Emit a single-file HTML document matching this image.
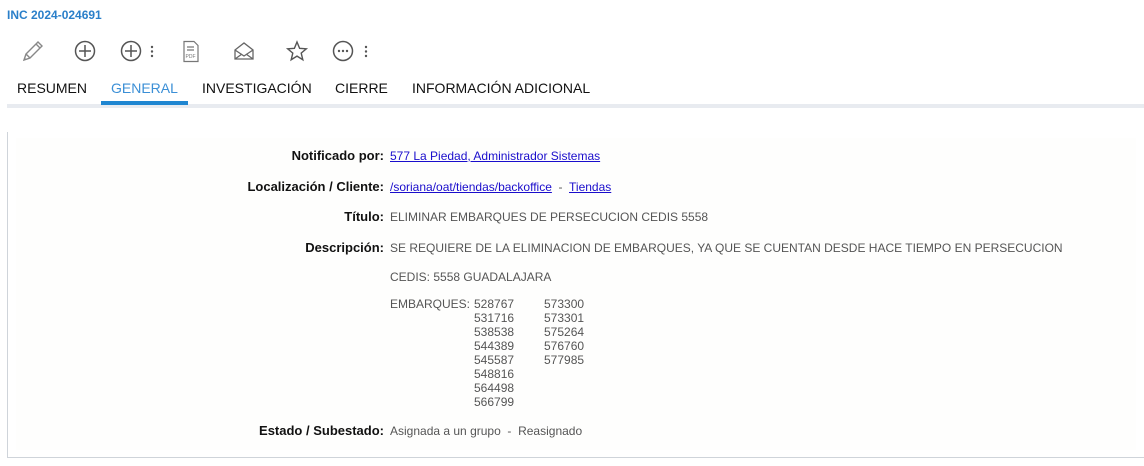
<!DOCTYPE html>
<html><head><meta charset="utf-8"><style>
*{margin:0;padding:0;box-sizing:border-box}
body{width:1144px;height:466px;background:#fff;font-family:"Liberation Sans",Arial,sans-serif;position:relative;overflow:hidden}
.title{position:absolute;left:7px;top:8px;font-size:12px;font-weight:bold;color:#2a7fc9}
.ic{position:absolute;top:40px}
.tabs{position:absolute;top:80px;left:0;font-size:14px;color:#111}
.tab{position:absolute;white-space:nowrap}
.band{position:absolute;left:7px;top:104px;width:1137px;height:4px;background:#e8ebf0}
.ul{position:absolute;left:101px;top:101px;width:87px;height:4px;background:#1f86d1}
.panel{position:absolute;left:7px;top:132px;width:1150px;height:326px;border-left:1px solid #cfd4da;border-bottom:1px solid #cfd4da}
.inner{position:absolute;left:16px;top:138px;width:1120px;height:312px;background:#fefefd}
.lab{position:absolute;right:760px;font-size:13px;font-weight:bold;color:#111;white-space:nowrap}
.val{position:absolute;left:390px;font-size:12px;color:#555;white-space:nowrap}
a{color:#1a0dcc;text-decoration:underline}
.num{position:absolute;font-size:12px;color:#555;line-height:14px}
</style></head><body>
<div class="title">INC 2024-024691</div>
<svg class="ic" style="left:20px" width="26" height="24" viewBox="0 0 26 24" fill="none" stroke="#888" stroke-width="1.4"><path d="M4 20 L6 14 L18 2 L22 6 L10 18 Z M6 14 L10 18 M16 4 L20 8 M4 20 l2 -1"/></svg>
<svg class="ic" style="left:73px" width="24" height="24" viewBox="0 0 24 24" fill="none" stroke="#555" stroke-width="1.5"><circle cx="12" cy="11" r="9.5"/><path d="M12 5v12M6 11h12"/></svg>
<svg class="ic" style="left:119px" width="40" height="24" viewBox="0 0 40 24" fill="none" stroke="#555" stroke-width="1.5"><circle cx="12" cy="11" r="9.5"/><path d="M12 5v12M6 11h12"/><circle cx="33" cy="7" r="1.2" fill="#555" stroke="none"/><circle cx="33" cy="11.5" r="1.2" fill="#555" stroke="none"/><circle cx="33" cy="16" r="1.2" fill="#555" stroke="none"/></svg>
<svg class="ic" style="left:182px" width="18" height="24" viewBox="0 0 18 24" fill="none" stroke="#777" stroke-width="1.2"><path d="M2 1.5h10l4 4v16H2z"/><path d="M5 7h7M5 10h7"/><text x="3.5" y="18" font-size="5" fill="#777" stroke="none" font-family="Liberation Sans">PDF</text></svg>
<svg class="ic" style="left:233px" width="22" height="24" viewBox="0 0 22 24" fill="none" stroke="#666" stroke-width="1.3"><path d="M2 10 L11 3 L20 10 V19 H2 Z M2 10 L11 16 L20 10 M2 19 L9 14 M20 19 L13 14"/></svg>
<svg class="ic" style="left:285px" width="24" height="24" viewBox="0 0 24 24" fill="none" stroke="#555" stroke-width="1.4"><path d="M12 2 L14.6 8.3 L21.3 8.8 L16.2 13.1 L17.8 19.7 L12 16.1 L6.2 19.7 L7.8 13.1 L2.7 8.8 L9.4 8.3 Z"/></svg>
<svg class="ic" style="left:331px" width="42" height="24" viewBox="0 0 42 24" fill="none" stroke="#555" stroke-width="1.5"><circle cx="12" cy="11" r="9.5"/><circle cx="8" cy="11" r="1.2" fill="#555" stroke="none"/><circle cx="12" cy="11" r="1.2" fill="#555" stroke="none"/><circle cx="16" cy="11" r="1.2" fill="#555" stroke="none"/><circle cx="35" cy="7" r="1.2" fill="#555" stroke="none"/><circle cx="35" cy="11.5" r="1.2" fill="#555" stroke="none"/><circle cx="35" cy="16" r="1.2" fill="#555" stroke="none"/></svg>
<div class="tabs">
<span class="tab" style="left:17px">RESUMEN</span>
<span class="tab" style="left:111px;color:#3b8fd6">GENERAL</span>
<span class="tab" style="left:202px">INVESTIGACIÓN</span>
<span class="tab" style="left:335px">CIERRE</span>
<span class="tab" style="left:412px">INFORMACIÓN ADICIONAL</span>
</div>
<div class="band"></div><div class="ul"></div>
<div class="inner"></div>
<div class="panel"></div>
<div class="lab" style="top:148px">Notificado por:</div>
<div class="val" style="top:149px"><a>577 La Piedad, Administrador Sistemas</a></div>
<div class="lab" style="top:179px">Localización / Cliente:</div>
<div class="val" style="top:180px"><a>/soriana/oat/tiendas/backoffice</a> &nbsp;-&nbsp; <a>Tiendas</a></div>
<div class="lab" style="top:209px">Título:</div>
<div class="val" style="top:210px">ELIMINAR EMBARQUES DE PERSECUCION CEDIS 5558</div>
<div class="lab" style="top:240px">Descripción:</div>
<div class="val" style="top:241px">SE REQUIERE DE LA ELIMINACION DE EMBARQUES, YA QUE SE CUENTAN DESDE HACE TIEMPO EN PERSECUCION</div>
<div class="val" style="top:270px">CEDIS: 5558 GUADALAJARA</div>
<div class="num" style="left:390px;top:297px">EMBARQUES:</div>
<div class="num" style="left:474px;top:297px">528767<br>531716<br>538538<br>544389<br>545587<br>548816<br>564498<br>566799</div>
<div class="num" style="left:544px;top:297px">573300<br>573301<br>575264<br>576760<br>577985</div>
<div class="lab" style="top:423px">Estado / Subestado:</div>
<div class="val" style="top:424px">Asignada a un grupo &nbsp;-&nbsp; Reasignado</div>
</body></html>
